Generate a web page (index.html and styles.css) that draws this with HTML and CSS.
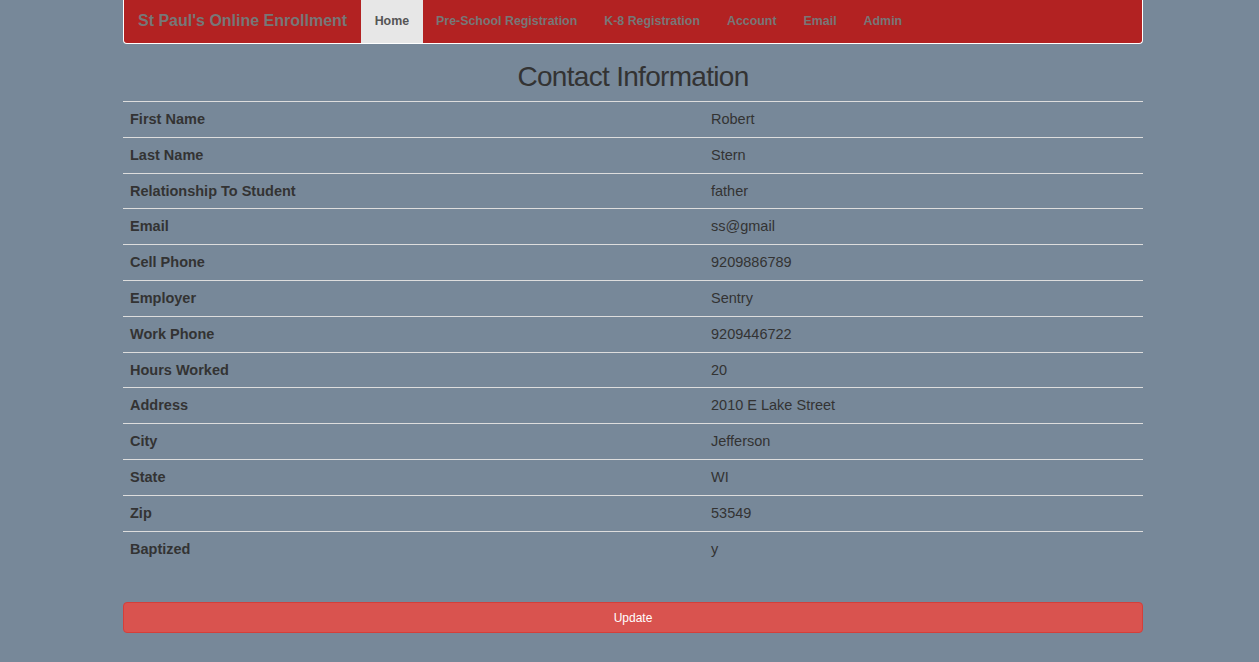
FILE: index.html
```html
<!DOCTYPE html>
<html>
<head>
<meta charset="utf-8">
<title>Contact Information</title>
<link rel="stylesheet" href="styles.css">
</head>
<body>
<div class="container">
  <nav class="navbar">
    <span class="brand">St Paul's Online Enrollment</span>
    <ul class="nav">
      <li class="active"><a>Home</a></li>
      <li><a>Pre-School Registration</a></li>
      <li><a>K-8 Registration</a></li>
      <li><a>Account</a></li>
      <li><a>Email</a></li>
      <li><a>Admin</a></li>
    </ul>
  </nav>
  <h2 class="title">Contact Information</h2>
  <table class="info">
    <tbody>
      <tr><th>First Name</th><td>Robert</td></tr>
      <tr><th>Last Name</th><td>Stern</td></tr>
      <tr><th>Relationship To Student</th><td>father</td></tr>
      <tr><th>Email</th><td>ss@gmail</td></tr>
      <tr><th>Cell Phone</th><td>9209886789</td></tr>
      <tr><th>Employer</th><td>Sentry</td></tr>
      <tr><th>Work Phone</th><td>9209446722</td></tr>
      <tr><th>Hours Worked</th><td>20</td></tr>
      <tr><th>Address</th><td>2010 E Lake Street</td></tr>
      <tr><th>City</th><td>Jefferson</td></tr>
      <tr><th>State</th><td>WI</td></tr>
      <tr><th>Zip</th><td>53549</td></tr>
      <tr><th>Baptized</th><td>y</td></tr>
    </tbody>
  </table>
  <button class="btn-update">Update</button>
</div>
</body>
</html>
```
FILE: styles.css
```css
html, body {
  margin: 0;
  padding: 0;
  background: #778899;
  font-family: "Liberation Sans", Arial, Helvetica, sans-serif;
  font-size: 14px;
  color: #333;
}
body {
  padding-left: 7px;
}
.container {
  width: 1020px;
  margin: 0 auto;
}
.navbar {
  display: flex;
  align-items: stretch;
  height: 43px;
  background: #b22222;
  border: 1px solid #fff;
  border-top: 0;
  border-radius: 0 0 4px 4px;
  box-sizing: content-box;
  width: 1018px;
}
.brand {
  display: flex;
  align-items: center;
  padding: 0 14px 2px;
  font-size: 16px;
  font-weight: bold;
  color: #777;
  white-space: nowrap;
}
.nav {
  display: flex;
  list-style: none;
  margin: 0;
  padding: 0;
}
.nav li {
  display: flex;
}
.nav a {
  display: flex;
  align-items: center;
  padding: 0 13.5px 2px;
  font-size: 12.4px;
  font-weight: bold;
  color: #777;
  white-space: nowrap;
}
.nav li.active a {
  background: #e7e7e7;
  color: #555;
}
.title {
  margin: 16px 0 8px;
  font-size: 28px;
  line-height: 33px;
  letter-spacing: -0.7px;
  font-weight: normal;
  text-align: center;
  color: #333;
}
.info {
  width: 100%;
  border-collapse: collapse;
  margin: 0;
  font-size: 14.5px;
}
.info th, .info td {
  padding: 8px;
  line-height: 18.8px;
  text-align: left;
  vertical-align: top;
  border-top: 1px solid #ddd;
}
.info th {
  width: 565px;
  padding-left: 7px;
  font-weight: bold;
}
.info td {
  font-weight: normal;
}
.btn-update {
  display: block;
  width: 100%;
  margin-top: 36px;
  height: 31px;
  padding: 0 10px;
  background: #d9534f;
  border: 1px solid #d43f3a;
  border-radius: 4px;
  color: #fff;
  font-family: "Liberation Sans", Arial, Helvetica, sans-serif;
  font-size: 12px;
  line-height: 18px;
}
```
